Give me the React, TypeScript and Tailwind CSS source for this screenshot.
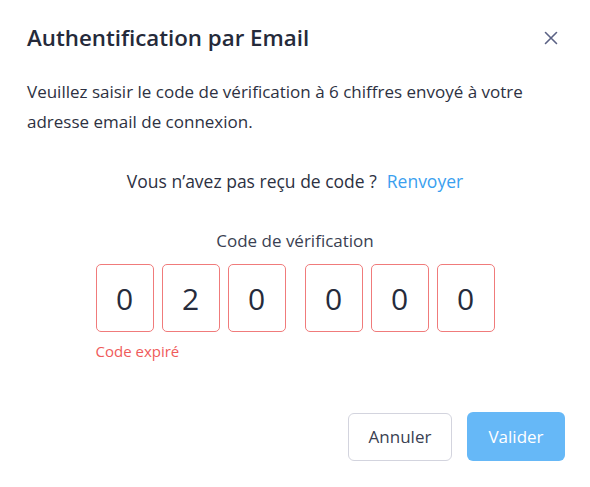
import React from 'react';

const digits = ['0', '2', '0', '0', '0', '0'];

const DigitBox = ({ value }: { value: string }) => (
    <div className="w-[58px] h-[68px] rounded-[5px] border border-[#f07b7b] flex items-center justify-center text-[30px] text-[#262b3b]">
        {value}
    </div>
);

export default function App() {
    return (
        <div className="w-[590px] h-[487px] bg-white text-[#2d3142]" style={{ fontFamily: '"Open Sans", "Noto Sans", sans-serif' }}>
            {/* Header */}
            <div className="flex items-center justify-between pl-[27px] pr-[27px] pt-[22px]">
                <h1 className="text-[22.3px] font-semibold leading-[32px] text-[#252a3a]">Authentification par Email</h1>
                <button className="w-6 h-6 flex items-center justify-center text-[#5b6285]">
                    <svg width="14" height="14" viewBox="0 0 14 14" fill="none">
                        <path d="M1.5 1.5L12.5 12.5M12.5 1.5L1.5 12.5" stroke="currentColor" strokeWidth="1.6" strokeLinecap="round" />
                    </svg>
                </button>
            </div>

            {/* Body */}
            <p className="px-[27px] mt-[23px] text-[17px] leading-[30px] text-[#2d3142]">
                Veuillez saisir le code de vérification à 6 chiffres envoyé à votre adresse email de connexion.
            </p>

            <div className="mt-[29px] text-center text-[17.5px] leading-[30px] text-[#2d3142]">
                Vous n’avez pas reçu de code ?<span className="ml-[10px] text-[#3aa0ef]">Renvoyer</span>
            </div>

            <div className="mt-[30px] text-center text-[17px] leading-[30px] text-[#3a3f52]">Code de vérification</div>

            <div className="flex justify-center mt-[8px]">
                <div className="flex flex-col">
                    <div className="flex gap-[8px]">
                        <div className="flex gap-[8px]">
                            {digits.slice(0, 3).map((d, i) => <DigitBox key={i} value={d} />)}
                        </div>
                        <div className="flex gap-[8px] ml-[11px]">
                            {digits.slice(3).map((d, i) => <DigitBox key={i} value={d} />)}
                        </div>
                    </div>
                    <div className="mt-[9px] text-[15px] leading-[20px] text-[#ef5b5b]">Code expiré</div>
                </div>
            </div>

            {/* Footer */}
            <div className="flex justify-end items-center gap-[15px] pr-[25px] mt-[51px]">
                <button className="w-[104px] h-[48px] rounded-[6px] border border-[#d3d4de] bg-white text-[17px] text-[#3a3f52]">
                    Annuler
                </button>
                <button className="w-[98px] h-[49px] rounded-[6px] bg-[#66b8f7] text-[17px] text-white">
                    Valider
                </button>
            </div>
        </div>
    );
}
